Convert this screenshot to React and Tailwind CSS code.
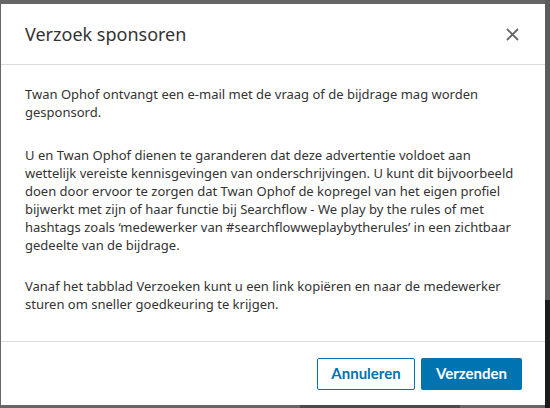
import React from "react";

const App = () => {
  return (
    <div className="relative w-[550px] h-[408px] bg-[#666666] overflow-hidden">
      {/* dimmed page behind the modal */}
      <div className="absolute right-0 top-0 w-[5px] h-[300px] bg-[#5c5c5c]" />
      <div className="absolute right-0 top-[300px] w-[5px] h-[108px] bg-[#1b1b1b]" />
      <div className="absolute left-[300px] bottom-0 w-[160px] h-[3px] bg-[#4a4a4a]" />

      <div
        className="relative ml-[1px] mt-[4px] w-[544px] h-[401px] bg-white flex flex-col"
        style={{ fontFamily: '"Noto Sans", "Open Sans", sans-serif' }}
      >
        {/* Header */}
        <div className="h-[61px] flex items-center justify-between pl-[24px] pr-[26px] border-b border-[#dcdcdc] shrink-0">
          <h2 className="text-[18px] text-[#333333] font-normal">Verzoek sponsoren</h2>
          <button className="w-[14px] h-[14px] flex items-center justify-center">
            <svg width="13" height="13" viewBox="0 0 13 13">
              <path d="M1 1 L12 12 M12 1 L1 12" stroke="#666666" strokeWidth="1.8" fill="none" />
            </svg>
          </button>
        </div>

        {/* Body */}
        <div className="flex-1 px-[24px] pt-[20px] text-[13px] leading-[18px] text-[#333333]">
          <p className="mb-[25px]">
            Twan Ophof ontvangt een e-mail met de vraag of de bijdrage mag worden
            <br />
            gesponsord.
          </p>
          <p className="mb-[23px]">
            U en Twan Ophof dienen te garanderen dat deze advertentie voldoet aan
            <br />
            wettelijk vereiste kennisgevingen van onderschrijvingen. U kunt dit bijvoorbeeld
            <br />
            doen door ervoor te zorgen dat Twan Ophof de kopregel van het eigen profiel
            <br />
            bijwerkt met zijn of haar functie bij Searchflow - We play by the rules of met
            <br />
            hashtags zoals ‘medewerker van #searchflowweplaybytherules’ in een zichtbaar
            <br />
            gedeelte van de bijdrage.
          </p>
          <p>
            Vanaf het tabblad Verzoeken kunt u een link kopiëren en naar de medewerker
            <br />
            sturen om sneller goedkeuring te krijgen.
          </p>
        </div>

        {/* Footer */}
        <div
          className="h-[64px] shrink-0 border-t border-[#dcdcdc] flex items-center justify-end gap-[6px] pr-[23px]"
          style={{ fontFamily: "Lato, sans-serif" }}
        >
          <button className="w-[98px] h-[32px] rounded-[2px] border border-[#0073b1] text-[#0073b1] text-[15px] font-bold bg-white">
            Annuleren
          </button>
          <button className="w-[101px] h-[32px] rounded-[2px] bg-[#0073b1] text-white text-[15px] font-bold">
            Verzenden
          </button>
        </div>
      </div>
    </div>
  );
};

export default App;
